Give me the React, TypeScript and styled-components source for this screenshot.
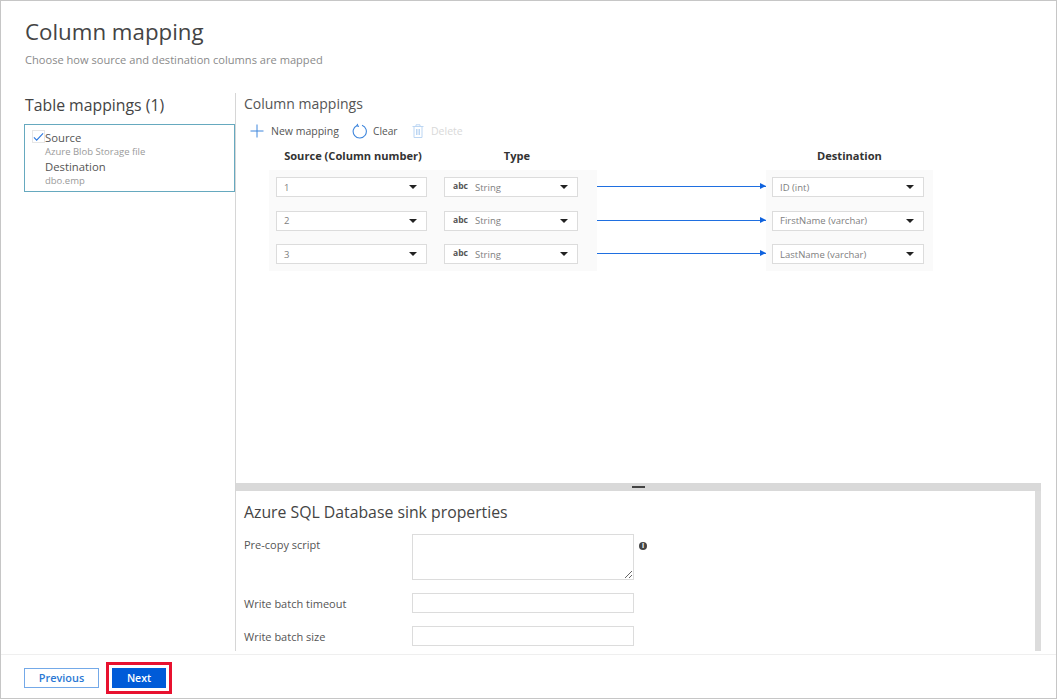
import React from 'react';
import styled, { createGlobalStyle } from 'styled-components';

const GlobalStyle = createGlobalStyle`
  html, body {
    margin: 0;
    padding: 0;
    background: #fff;
    font-family: "Open Sans", "Noto Sans", "Liberation Sans", sans-serif;
  }
  * { box-sizing: border-box; }
`;

const Frame = styled.div`
  width: 1057px;
  height: 699px;
  border: 1px solid #c6c6c6;
  display: flex;
  flex-direction: column;
  background: #fff;
  overflow: hidden;
`;

const Header = styled.header`
  height: 92px;
  padding: 15px 0 0 24px;
`;

const Title = styled.h1`
  margin: 0;
  font-size: 22.3px;
  line-height: 32px;
  font-weight: 400;
  color: #444;
`;

const Subtitle = styled.p`
  margin: 4px 0 0;
  font-size: 11.1px;
  line-height: 16px;
  color: #8a8a8a;
`;

const Body = styled.div`
  height: 558px;
  display: flex;
`;

const LeftPane = styled.aside`
  width: 234px;
  flex: none;
  padding: 1px 0 0 23px;
`;

const LeftTitle = styled.h2`
  margin: 0 0 8px 1px;
  font-size: 15.8px;
  line-height: 22px;
  font-weight: 400;
  color: #444;
`;

const TableCard = styled.div`
  height: 68px;
  border: 1px solid #66a9bf;
  padding: 6px 0 0 7px;
  display: flex;
  align-items: flex-start;
`;

const CheckBox = styled.span`
  width: 13px;
  height: 13px;
  flex: none;
  margin-top: -1px;
  border: 1px solid #e6e6e6;
  display: flex;
  align-items: center;
  justify-content: center;
`;

const CardText = styled.div`
  display: flex;
  flex-direction: column;
`;

const CardLabel = styled.span`
  font-size: 11.3px;
  line-height: 14.3px;
  color: #555;
`;

const CardValue = styled.span`
  font-size: 9.5px;
  line-height: 14.3px;
  color: #9a9a9a;
`;

const RightPane = styled.main`
  flex: 1;
  min-width: 0;
  border-left: 1px solid #d6d6d6;
  display: flex;
  flex-direction: column;
`;

const TopPane = styled.section`
  height: 390px;
  flex: none;
  padding: 1px 0 0 8px;
`;

const SectionTitle = styled.h3`
  margin: 0;
  font-size: 14px;
  line-height: 20px;
  font-weight: 400;
  color: #555;
`;

const Toolbar = styled.div`
  display: flex;
  align-items: center;
  height: 18px;
  margin: 8px 0 0 6px;
`;

const ToolButton = styled.span<{ $disabled?: boolean; $gap: number; $width: number; $size?: number }>`
  display: flex;
  align-items: center;
  gap: ${(p) => p.$gap}px;
  width: ${(p) => p.$width}px;
  font-size: ${(p) => p.$size ?? 10.5}px;
  color: ${(p) => (p.$disabled ? '#d9d9d9' : '#555')};
  white-space: nowrap;
`;

const MappingGrid = styled.div`
  display: grid;
  grid-template-columns: 328px 169px 167px;
  margin: 5px 0 0 25px;
`;

const ColumnHeads = styled.div<{ $columns: string }>`
  display: grid;
  grid-template-columns: ${(p) => p.$columns};
  height: 25px;
  padding-bottom: 5px;
  align-items: center;
  text-align: center;
  font-size: 11.1px;
  font-weight: 700;
  color: #333;
  white-space: nowrap;
`;

const RowGroup = styled.div<{ $inset: number }>`
  background: #fafafa;
  padding: 7px 0 7px ${(p) => p.$inset}px;
  display: flex;
  flex-direction: column;
  gap: 13.5px;
  height: 101px;
`;

const SelectRow = styled.div`
  display: flex;
  gap: 17px;
`;

const Select = styled.div<{ $width: number }>`
  width: ${(p) => p.$width}px;
  height: 20px;
  flex: none;
  background: #fff;
  border: 1px solid #dcdcdc;
  display: flex;
  align-items: center;
  padding: 0 9px 0 7px;
  font-size: 9.5px;
  color: #808080;
`;

const SelectText = styled.span`
  flex: 1;
  white-space: nowrap;
`;

const TypeTag = styled.span`
  font-size: 8.5px;
  font-weight: 700;
  color: #555;
  width: 22px;
  margin: -3px 0 0 1px;
`;

const Caret = styled.span`
  width: 0;
  height: 0;
  border-left: 4px solid transparent;
  border-right: 4px solid transparent;
  border-top: 4px solid #222;
`;

const Connectors = styled.div`
  display: flex;
  flex-direction: column;
  padding-top: 16px;
  gap: 32.5px;
`;

const Connector = styled.div`
  height: 1px;
  background: #1f6fe0;
  position: relative;
  &::after {
    content: '';
    position: absolute;
    right: 0;
    top: -3px;
    border-left: 6px solid #0f62de;
    border-top: 3.5px solid transparent;
    border-bottom: 3.5px solid transparent;
  }
`;

const Splitter = styled.div`
  height: 8px;
  flex: none;
  margin-right: 15px;
  background: #d9d9d9;
  display: flex;
  justify-content: center;
  padding-top: 3px;
`;

const Grip = styled.span`
  width: 13px;
  height: 2px;
  background: #444;
`;

const BottomPane = styled.section`
  flex: 1;
  min-height: 0;
  padding: 9px 0 0 8px;
  border-right: 6px solid #dcdcdc;
  margin-right: 15px;
  overflow: hidden;
`;

const PropertiesTitle = styled.h3`
  margin: 0 0 10px;
  font-size: 15.8px;
  line-height: 24px;
  font-weight: 400;
  color: #444;
`;

const FormRow = styled.div`
  display: grid;
  grid-template-columns: 168px 222px 20px;
  margin-bottom: 13px;
  font-size: 11px;
  color: #555;
`;

const FormLabel = styled.label`
  height: 20px;
  line-height: 22px;
`;

const ScriptArea = styled.textarea`
  display: block;
  width: 222px;
  height: 46px;
  margin: 0;
  padding: 0;
  border: 1px solid #dcdcdc;
  border-radius: 0;
  outline: none;
  background: #fff;
`;

const TextInput = styled.input`
  display: block;
  width: 222px;
  height: 20px;
  padding: 0;
  border: 1px solid #dcdcdc;
  border-radius: 0;
  background: #fff;
`;

const InfoDot = styled.span`
  margin: 8px 0 0 5px;
  width: 8px;
  height: 8px;
  border-radius: 50%;
  background: #444;
  color: #fff;
  font-size: 7px;
  line-height: 8px;
  font-weight: 700;
  text-align: center;
`;

const Footer = styled.footer`
  margin-top: 3px;
  border-top: 1px solid #efefef;
  flex: 1;
  display: flex;
  align-items: center;
  padding: 2px 0 0 23px;
  gap: 13px;
`;

const Button = styled.button<{ $primary?: boolean }>`
  height: 20px;
  width: ${(p) => (p.$primary ? 54 : 75)}px;
  padding: 0;
  border: 1px solid ${(p) => (p.$primary ? '#005bd8' : '#74a9e8')};
  background: ${(p) => (p.$primary ? '#005bd8' : '#fff')};
  color: ${(p) => (p.$primary ? '#fff' : '#2b78d4')};
  font-family: inherit;
  font-size: ${(p) => (p.$primary ? 10.5 : 10.9)}px;
  font-weight: 600;
  outline: ${(p) => (p.$primary ? '3px solid #e8112f' : 'none')};
  outline-offset: ${(p) => (p.$primary ? 3 : 0)}px;
`;

const PlusIcon = () => (
  <svg width="14" height="14" viewBox="0 0 14 14" fill="none" stroke="#3f86dc" strokeWidth="1">
    <path d="M7 0.5v13M0.5 7h13" />
  </svg>
);

const RefreshIcon = () => (
  <svg width="16" height="16" viewBox="0 0 16 16" fill="none" stroke="#3f86dc" strokeWidth="1.1">
    <path d="M5 2.4A6.6 6.6 0 1 0 10 2.2" />
    <path d="M5.6 0.8 5 2.8 7 3.4" />
  </svg>
);

const TrashIcon = () => (
  <svg width="12" height="14" viewBox="0 0 12 14" fill="none" stroke="#bcd6f3" strokeWidth="1">
    <path d="M0.5 2.5h11M4 2.5V0.8h4v1.7M2 2.5v11h8v-11M4.5 5v6M6 5v6M7.5 5v6" />
  </svg>
);

const CheckIcon = () => (
  <svg width="12" height="10" viewBox="0 0 12 10" fill="none" stroke="#2b78e0" strokeWidth="1.2">
    <path d="M1 5.5 4 8.5 11 1" />
  </svg>
);

const sources = ['1', '2', '3'];
const destinations = ['ID (int)', 'FirstName (varchar)', 'LastName (varchar)'];

const App: React.FC = () => {
  return (
    <Frame>
      <GlobalStyle />
      <Header>
        <Title>Column mapping</Title>
        <Subtitle>Choose how source and destination columns are mapped</Subtitle>
      </Header>
      <Body>
        <LeftPane>
          <LeftTitle>Table mappings (1)</LeftTitle>
          <TableCard>
            <CheckBox>
              <CheckIcon />
            </CheckBox>
            <CardText>
              <CardLabel>Source</CardLabel>
              <CardValue>Azure Blob Storage file</CardValue>
              <CardLabel>Destination</CardLabel>
              <CardValue>dbo.emp</CardValue>
            </CardText>
          </TableCard>
        </LeftPane>
        <RightPane>
          <TopPane>
            <SectionTitle>Column mappings</SectionTitle>
            <Toolbar>
              <ToolButton $gap={7} $width={102}>
                <PlusIcon />
                New mapping
              </ToolButton>
              <ToolButton $gap={5} $width={60} $size={10.2}>
                <RefreshIcon />
                Clear
              </ToolButton>
              <ToolButton $disabled $gap={7} $width={60}>
                <TrashIcon />
                Delete
              </ToolButton>
            </Toolbar>
            <MappingGrid>
              <ColumnHeads $columns="168px 160px">
                <span>Source (Column number)</span>
                <span>Type</span>
              </ColumnHeads>
              <span />
              <ColumnHeads $columns="1fr">
                <span>Destination</span>
              </ColumnHeads>
              <RowGroup $inset={7}>
                {sources.map((source) => (
                  <SelectRow key={source}>
                    <Select $width={151}>
                      <SelectText>{source}</SelectText>
                      <Caret />
                    </Select>
                    <Select $width={134}>
                      <TypeTag>abc</TypeTag>
                      <SelectText>String</SelectText>
                      <Caret />
                    </Select>
                  </SelectRow>
                ))}
              </RowGroup>
              <Connectors>
                {sources.map((source) => (
                  <Connector key={source} />
                ))}
              </Connectors>
              <RowGroup $inset={6}>
                {destinations.map((destination) => (
                  <Select key={destination} $width={152}>
                    <SelectText>{destination}</SelectText>
                    <Caret />
                  </Select>
                ))}
              </RowGroup>
            </MappingGrid>
          </TopPane>
          <Splitter>
            <Grip />
          </Splitter>
          <BottomPane>
            <PropertiesTitle>Azure SQL Database sink properties</PropertiesTitle>
            <FormRow>
              <FormLabel>Pre-copy script</FormLabel>
              <ScriptArea />
              <InfoDot>i</InfoDot>
            </FormRow>
            <FormRow>
              <FormLabel>Write batch timeout</FormLabel>
              <TextInput />
            </FormRow>
            <FormRow>
              <FormLabel>Write batch size</FormLabel>
              <TextInput />
            </FormRow>
          </BottomPane>
        </RightPane>
      </Body>
      <Footer>
        <Button>Previous</Button>
        <Button $primary>Next</Button>
      </Footer>
    </Frame>
  );
};

export default App;
